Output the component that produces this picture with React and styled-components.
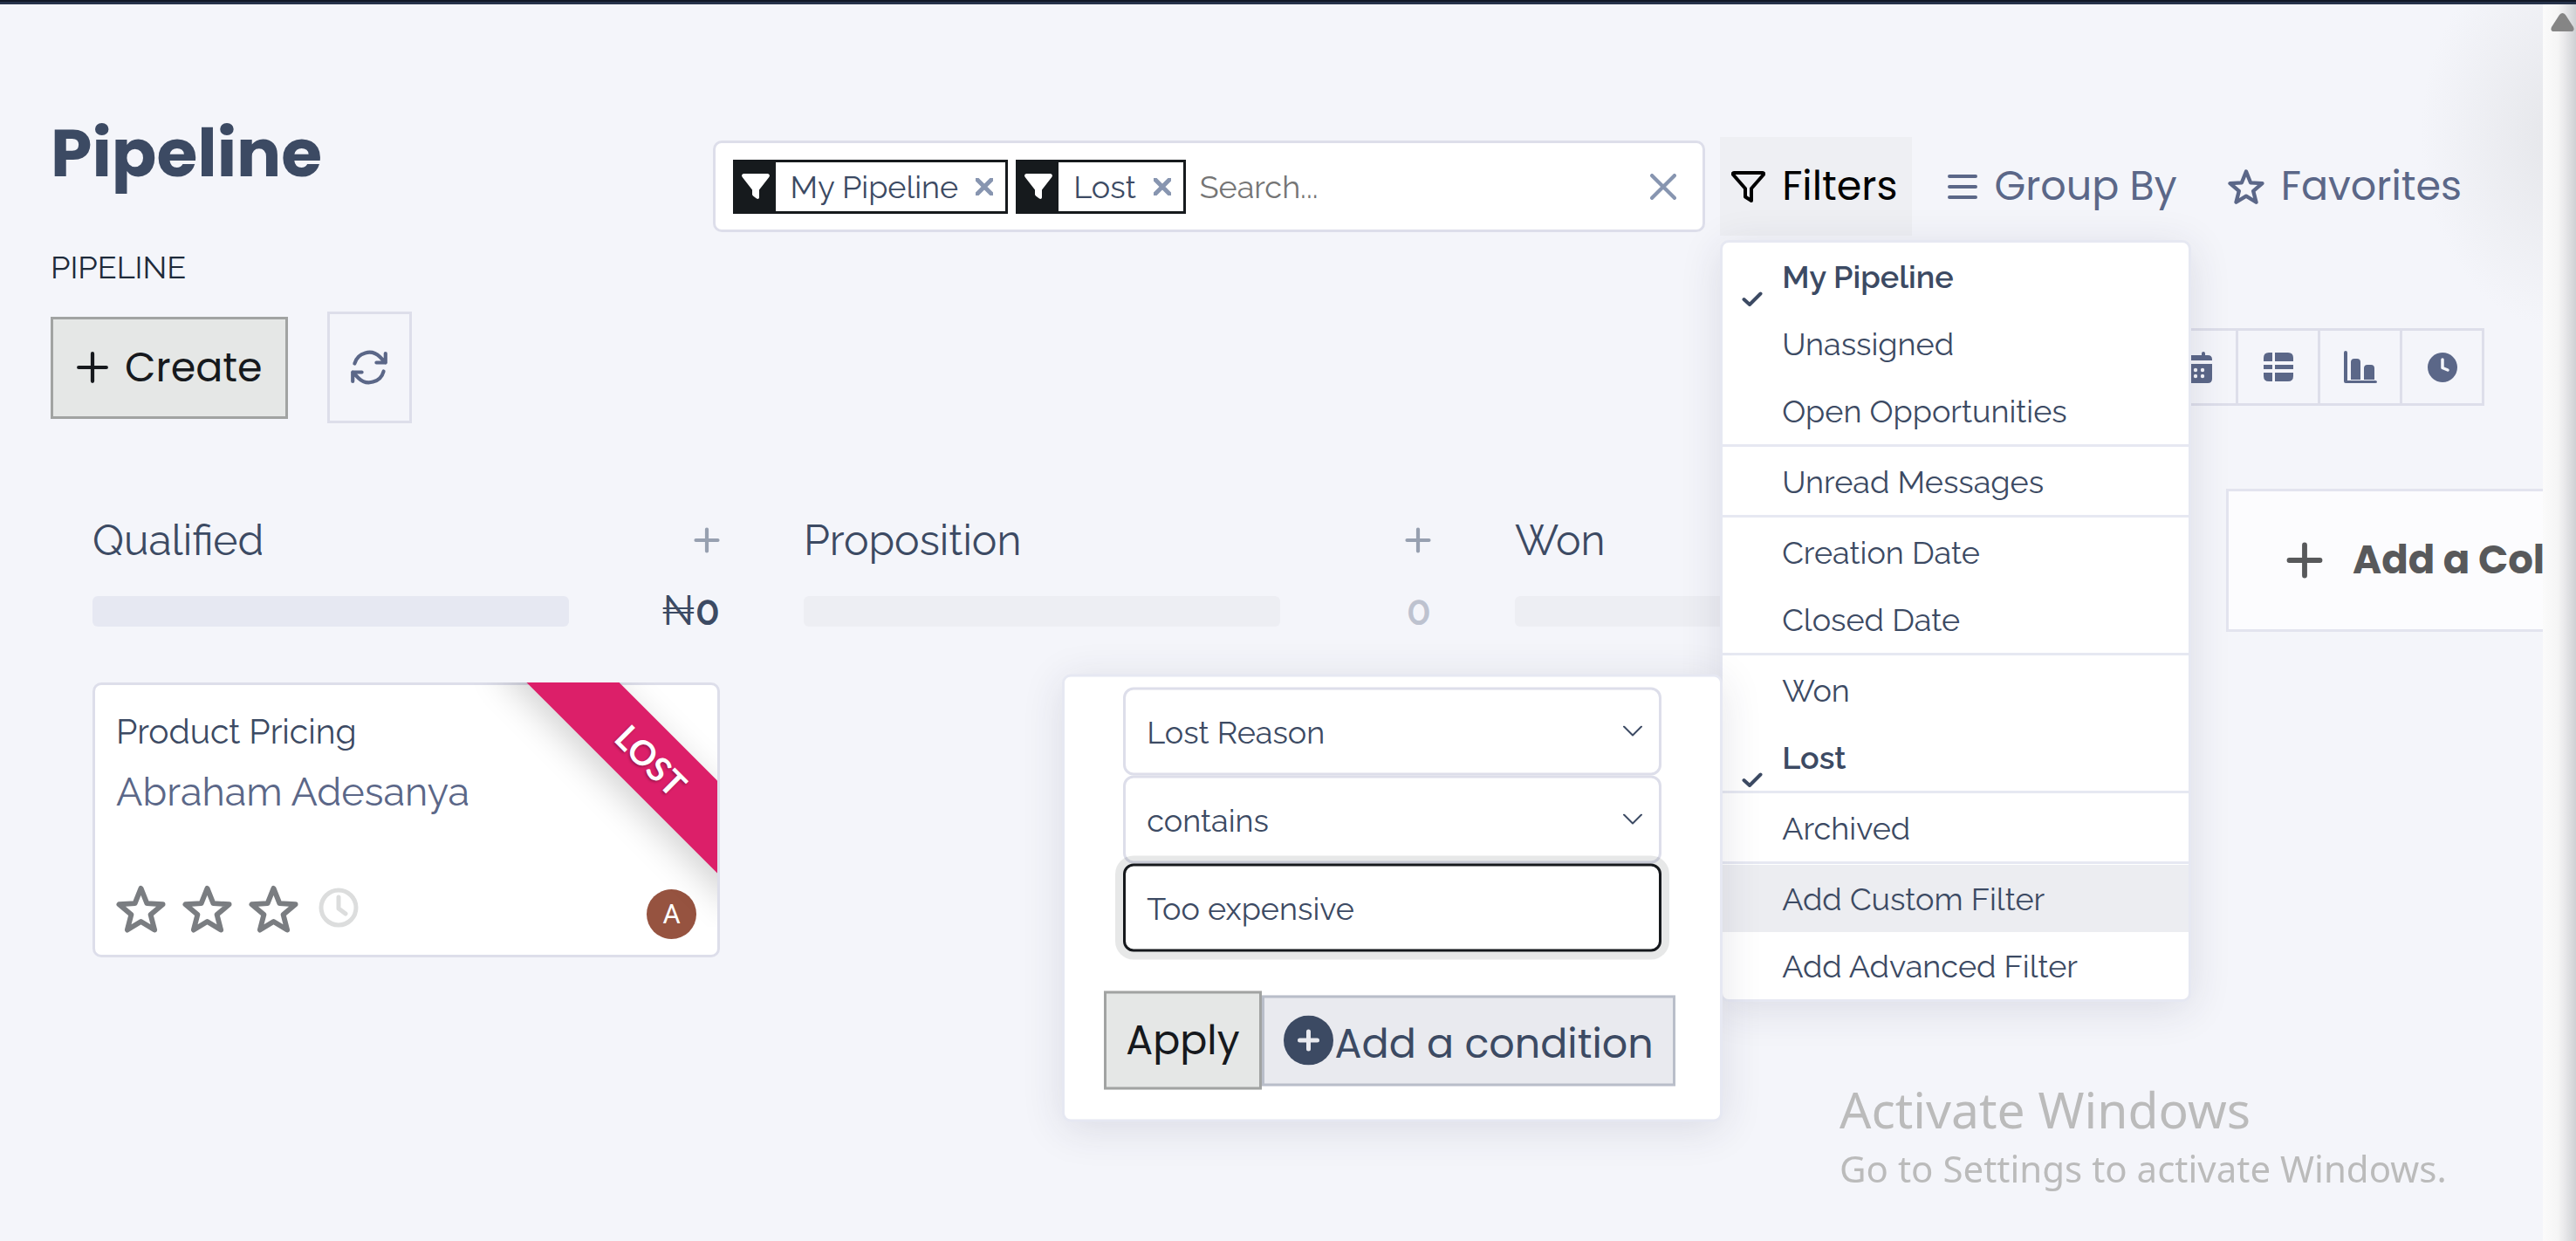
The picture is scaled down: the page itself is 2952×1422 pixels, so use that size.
import React from "react";
import styled, { createGlobalStyle, css } from "styled-components";
import { HiOutlineArrowPath } from "react-icons/hi2";

const heading = '"Poppins", Inter, sans-serif';
const body = '"Raleway", Lato, sans-serif';

const GlobalStyle = createGlobalStyle`
  * { box-sizing: border-box; }
  html, body { margin: 0; background: #f4f5fa; }
  body { font-family: ${body}; color: #3c4a63; overflow: hidden; }
  button, input, select { font: inherit; color: inherit; margin: 0; }
  h1, h2, h3, p, ul { margin: 0; padding: 0; font-weight: 400; }
  ul { list-style: none; }
  svg { display: block; flex: none; }
`;

const Page = styled.div`
  display: grid;
  grid-template-columns: minmax(0, 1fr) 38px;
  height: 100vh;
  border-top: 2px solid #111826;
`;

const Main = styled.main`
  overflow: hidden;
  border-top: 3px solid #26324a;
  background: radial-gradient(ellipse 160px 220px at calc(100% + 20px) 150px, #e5e6ea, #f4f5fa) #f4f5fa;
`;

const ScrollTrack = styled.aside`
  display: flex;
  justify-content: flex-end;
  align-items: flex-start;
  padding: 10px 2px;
  border-top: 3px solid #26324a;
  background: linear-gradient(to right, #fbfbfb, #f5f5f5 45%, #e9e9eb 65%, #cfd1d4);
`;

const Header = styled.header`
  display: grid;
  grid-template-columns: minmax(0, 272fr) minmax(0, 728fr);
  padding: 123px 67px 0 58px;
`;

const Title = styled.h1`
  font: 700 76px/96px ${heading};
  color: #3c4a63;
`;

const Breadcrumb = styled.p`
  margin-top: 60px;
  font-size: 36px;
  line-height: 44px;
  color: #1e2a3a;
`;

const Actions = styled.div`
  display: flex;
  align-items: center;
  gap: 45px;
  margin-top: 29px;
`;

const Button = styled.button`
  display: flex;
  align-items: center;
  justify-content: center;
  gap: ${(p) => p.$gap || 18}px;
  height: ${(p) => p.$height}px;
  padding: 0 ${(p) => p.$pad || 22}px;
  border: 3px solid #a1a3a2;
  background: #e5e7e6;
  color: #16191d;
  font-family: ${heading};
  font-size: 46px;
  white-space: nowrap;
`;

const ConditionButton = styled(Button)`
  padding-top: 8px;
  border-color: #b9bec9;
  background: #e9eaef;
  color: #3c4a63;
  svg { margin-bottom: 8px; }
`;

const RefreshButton = styled.button`
  display: flex;
  align-items: center;
  justify-content: center;
  width: 97px;
  height: 128px;
  border: 3px solid #dddeea;
  background: transparent;
  color: #5b6788;
`;

const Tools = styled.div`
  display: flex;
  flex-direction: column;
  padding-top: 29px;
`;

const SearchRow = styled.div`
  display: flex;
  align-items: center;
  gap: 17px;
  padding-right: 9px;
`;

const SearchBox = styled.div`
  flex: 1;
  min-width: 0;
  display: flex;
  align-items: center;
  gap: 9px;
  height: 105px;
  padding: 0 30px 0 20px;
  border: 3px solid #dddeea;
  border-radius: 10px;
  background: #fff;
`;

const Chip = styled.div`
  display: flex;
  height: 62px;
  border: 3px solid #161a1d;
  font-size: 36px;
  line-height: 56px;
  white-space: nowrap;
`;

const ChipIcon = styled.span`
  display: flex;
  align-items: center;
  justify-content: center;
  width: 46px;
  background: #161a1d;
  color: #fff;
`;

const ChipText = styled.span`
  padding: 0 20px 0 17px;
`;

const IconButton = styled.button`
  display: flex;
  align-items: center;
  padding: 0 ${(p) => p.$pad || 0}px 0 0;
  border: 0;
  background: none;
  color: ${(p) => p.$color || "#8795b0"};
`;

const SearchInput = styled.input`
  flex: 1;
  min-width: 0;
  padding: 0 7px;
  border: 0;
  outline: 0;
  background: none;
  font-size: 36px;
  &::placeholder { color: #757575; opacity: 1; }
`;

const ToolMenus = styled.nav`
  display: flex;
  gap: 28px;
`;

const Dropdown = styled.div`
  position: relative;
`;

const MenuToggle = styled.button`
  display: flex;
  align-items: center;
  gap: 19px;
  height: 113px;
  padding: 0 17px 0 13px;
  border: 0;
  background: ${(p) => (p.$open ? "#eeeff3" : "transparent")};
  color: ${(p) => (p.$open ? "#000" : "#5b6788")};
  font-family: ${heading};
  font-size: 46px;
  white-space: nowrap;
`;

const panel = css`
  border: 3px solid #e6e8f2;
  border-radius: 10px;
  background: #fff;
  box-shadow: 0 8px 48px rgba(40, 40, 70, 0.12);
`;

const Menu = styled.ul`
  ${panel}
  position: absolute;
  z-index: 2;
  top: calc(100% + 5px);
  left: 0;
  width: 540px;
`;

const MenuItem = styled.li`
  position: relative;
  padding-top: ${(p) => (p.$divided ? 1 : 0)}px;
  border-top: ${(p) => (p.$divided ? "3px solid #e6e8f2" : "0")};
`;

const MenuButton = styled.button`
  display: grid;
  grid-template-columns: 46px 1fr;
  align-items: center;
  width: 100%;
  height: 77px;
  padding: 0 0 0 22px;
  border: 0;
  background: ${(p) => (p.$active ? "#ecedf1" : "transparent")};
  color: #3c4a63;
  font-size: 36px;
  line-height: 46px;
  font-weight: ${(p) => (p.$checked ? 600 : 400)};
  text-align: left;
  svg { align-self: end; margin-bottom: 4px; }
`;

const MenuLabel = styled.span`
  grid-column: 2;
  grid-row: 1;
`;

const FilterPanel = styled.form`
  ${panel}
  position: absolute;
  top: 50%;
  right: 100%;
  transform: translateY(-50%);
  width: 757px;
  padding: 12px 0 34px;
`;

const Fields = styled.div`
  padding: 0 67px;
`;

const SelectWrap = styled.div`
  display: grid;
  align-items: center;
  > * { grid-area: 1 / 1; }
  > svg { justify-self: end; margin-right: 22px; pointer-events: none; }
`;

const control = css`
  width: 100%;
  height: 101px;
  padding: 0 24px;
  border: 3px solid #dddeea;
  border-radius: 12px;
  background: #fff;
  font-size: 36px;
  outline: 0;
`;

const Select = styled.select`
  ${control}
  appearance: none;
`;

const TextInput = styled.input`
  ${control}
  display: block;
  position: relative;
  border-color: #16191d;
  box-shadow: 0 0 0 9px rgba(22, 32, 29, 0.1);
`;

const PanelActions = styled.div`
  display: flex;
  align-items: center;
  margin-top: 45px;
  padding: 0 45px;
`;

const Views = styled.div`
  display: flex;
  align-self: flex-end;
  margin-top: 106px;
  border: 3px solid #dddeea;
`;

const ViewButton = styled.button`
  display: flex;
  align-items: center;
  justify-content: center;
  width: ${(p) => (p.$first ? 91 : 94)}px;
  height: 83px;
  border: 0;
  border-left: ${(p) => (p.$first ? "0" : "3px solid #dddeea")};
  background: transparent;
  color: #5b6788;
`;

const Board = styled.section`
  display: flex;
  align-items: flex-start;
  gap: 96px;
  padding: 75px 0 0 106px;
`;

const Column = styled.section`
  flex: 0 0 719px;
  padding-top: 30px;
`;

const ColumnHeader = styled.div`
  display: flex;
  align-items: center;
  justify-content: space-between;
`;

const ColumnTitle = styled.h2`
  font-size: 48px;
  line-height: 58px;
`;

const Progress = styled.div`
  display: flex;
  align-items: center;
  justify-content: space-between;
  height: 44px;
  margin-top: 30px;
`;

const Bar = styled.div`
  width: 76%;
  height: 35px;
  border-radius: 6px;
  background: ${(p) => (p.$empty ? "#edeef3" : "#e6e8f2")};
`;

const Total = styled.span`
  font-size: 46px;
  line-height: 44px;
  font-weight: 600;
  color: ${(p) => (p.$empty ? "#bdc2cf" : "#3c4a63")};
`;

const Currency = styled.span`
  font-weight: 400;
`;

const Card = styled.article`
  position: relative;
  height: 315px;
  display: flex;
  flex-direction: column;
  margin-top: 60px;
  padding: 29px 24px 18px;
  border: 3px solid #dddeea;
  border-radius: 10px;
  background: #fff;
`;

const CardTitle = styled.h3`
  font-size: 39px;
  line-height: 48px;
`;

const CardLink = styled.a`
  margin-top: 18px;
  font-size: 45px;
  line-height: 56px;
  color: #5b6788;
  text-decoration: none;
`;

const CardFooter = styled.div`
  display: flex;
  align-items: flex-start;
  gap: 19px;
  margin-top: auto;
  color: #7a7d81;
`;

const Avatar = styled.span`
  margin: 6px 0 0 auto;
  width: 57px;
  height: 57px;
  border-radius: 50%;
  background: #965340;
  color: #fff;
  font: 400 31px/57px Roboto, sans-serif;
  text-align: center;
`;

const RibbonClip = styled.div`
  position: absolute;
  top: -3px;
  right: 0;
  width: 280px;
  height: 280px;
  overflow: hidden;
`;

const Ribbon = styled.span`
  position: absolute;
  top: 52px;
  left: 4px;
  width: 400px;
  transform: rotate(45deg);
  background: #dc1f69;
  box-shadow: 0 12px 40px rgba(0, 0, 0, 0.18);
  color: #fff;
  font: 700 39px/75px Lato, sans-serif;
  text-align: center;
  text-shadow: 0 2px 3px rgba(0, 0, 0, 0.3);
`;

const AddColumn = styled.button`
  display: flex;
  align-items: center;
  gap: 34px;
  flex: 0 0 719px;
  height: 164px;
  padding: 0 66px;
  border: 3px solid #e3e4ef;
  background: #fcfcfe;
  color: #58595b;
  font: 700 45px/56px ${heading};
  white-space: nowrap;
`;

const Watermark = styled.div`
  position: fixed;
  z-index: 3;
  right: 152px;
  bottom: 53px;
  width: 692px;
  font-family: "Segoe UI", "Noto Sans", sans-serif;
  color: #bbb;
  white-space: nowrap;
  pointer-events: none;
`;

const WatermarkTitle = styled.p`
  font-size: 57px;
  line-height: 76px;
`;

const WatermarkText = styled.p`
  font-size: 42px;
  line-height: 60px;
`;

const Stroke = ({ w, h = w, box, width = 2, children }) => (
  <svg width={w} height={h} viewBox={box || `0 0 ${w} ${h}`} fill="none" stroke="currentColor"
    strokeWidth={width} strokeLinecap="round" strokeLinejoin="round" aria-hidden="true">{children}</svg>
);
const Fill = ({ w, h = w, children }) => (
  <svg width={w} height={h} viewBox={`0 0 ${w} ${h}`} fill="currentColor" aria-hidden="true">{children}</svg>
);

const Plus = ({ size, width = 4 }) => (
  <Stroke w={size} box="0 0 36 36" width={width}><path d="M18 3v30M3 18h30" /></Stroke>
);
const Cross = ({ size, width }) => (
  <Stroke w={size} box="0 0 28 28" width={width}><path d="M2 2l24 24M26 2L2 26" /></Stroke>
);
const Bars = () => (
  <Stroke w={34} h={30} width={4}><path d="M2 3h30M2 15h30M2 27h30" /></Stroke>
);
const FunnelOutline = () => (
  <Stroke w={39} h={36} width={4}><path d="M3 2h33q1.500 0 1 2L23 20v14l-7-4.500V20L2 4q-.5-2 1-2z" /></Stroke>
);
const FunnelSolid = () => (
  <Fill w={32} h={29}><path d="M2.500 0h27c2.200 0 3.200 2.300 1.800 4L20 18.500V27c0 1.800-1.600 2.400-3 1.400l-4-3c-.7-.6-1-1.200-1-2v-5L.7 4C-.7 2.300.3 0 2.500 0z" /></Fill>
);
const Star = ({ size, width }) => (
  <Stroke w={size} box="0 0 58 56" width={width}>
    <path d="M29 4l7 17.500 18.500 1.200-14.200 12 4.600 17.800L29 42.800 13.100 52.500l4.600-17.800-14.200-12L22 21.500z" />
  </Stroke>
);
const Check = () => (
  <Stroke w={24} h={17} width={4}><path d="M2.500 9l6.500 6L21.500 2.500" /></Stroke>
);
const Chevron = () => (
  <Stroke w={22} h={13} width={2}><path d="M1 1l10 10L21 1" /></Stroke>
);
const ClockOutline = () => (
  <Stroke w={54} width={5}><circle cx="27" cy="27" r="20" /><path d="M27 15v13l8 6" /></Stroke>
);
const ClockSolid = () => (
  <Fill w={34}><circle cx="17" cy="17" r="17" /><path d="M17 8v9.500l6 2.500" stroke="#f4f5fa" strokeWidth="3.500" fill="none" strokeLinecap="round" strokeLinejoin="round" /></Fill>
);
const Calendar = () => (
  <Fill w={36} h={36}>
    <path d="M0 9q0-5 5-5h3V2q0-2 2-2t2 2v2h12V2q0-2 2-2t2 2v2h3q5 0 5 5v1H0zM0 14h36v17q0 5-5 5H5q-5 0-5-5z" />
    <g fill="#f4f5fa">
      {[21, 28].map((y) => [9, 17, 25].map((x) => <circle key={`${x}-${y}`} cx={x} cy={y} r="2.200" />))}
    </g>
  </Fill>
);
const ListIcon = () => (
  <Fill w={34} h={33}>
    <path d="M6 0h4v10H0V6q0-6 6-6zM13 0h15q6 0 6 6v4H13zM0 14h10v5H0zM13 14h21v5H13zM0 23h10v10H6q-6 0-6-6zM13 23h21v4q0 6-6 6H13z" />
  </Fill>
);
const ChartIcon = () => (
  <Fill w={38} h={37}>
    <path d="M2 0q2 0 2 2v32h32q2 0 2 1.500T36 37H2q-2 0-2-2V2q0-2 2-2zM8 13q0-4 4-4h3q4 0 4 4v20H8zM23 20q0-4 4-4h4q4 0 4 4v13H23z" />
  </Fill>
);
const CirclePlus = () => (
  <Fill w={57}><circle cx="28.500" cy="28.500" r="28.500" /><path d="M28.500 18.500v20M18.500 28.500h20" stroke="#e9eaef" strokeWidth="5" strokeLinecap="round" /></Fill>
);
const ScrollArrow = () => (
  <Fill w={27} h={21}><path d="M10 2q3.500-4 7 0l9 14q2 5-3 5H4q-5 0-3-5z" fill="#858585" /></Fill>
);

const filters = [
  { label: "My Pipeline", checked: true },
  { label: "Unassigned" },
  { label: "Open Opportunities" },
  { label: "Unread Messages", divided: true },
  { label: "Creation Date", divided: true },
  { label: "Closed Date" },
  { label: "Won", divided: true },
  { label: "Lost", checked: true },
  { label: "Archived", divided: true },
  { label: "Add Custom Filter", divided: true, active: true },
  { label: "Add Advanced Filter" },
];

const views = [
  ["Calendar", Calendar],
  ["Pivot", ListIcon],
  ["Graph", ChartIcon],
  ["Activity", ClockSolid],
];

function SearchChip({ label }) {
  return (
    <Chip>
      <ChipIcon><FunnelSolid /></ChipIcon>
      <ChipText>{label}</ChipText>
      <IconButton $pad={14} type="button" aria-label={`Remove ${label}`}><Cross size={20} width={7} /></IconButton>
    </Chip>
  );
}

function CustomFilter() {
  return (
    <FilterPanel onSubmit={(e) => e.preventDefault()}>
      <Fields>
        <SelectWrap>
          <Select aria-label="Field" defaultValue="Lost Reason"><option>Lost Reason</option></Select>
          <Chevron />
        </SelectWrap>
        <SelectWrap>
          <Select aria-label="Operator" defaultValue="contains"><option>contains</option></Select>
          <Chevron />
        </SelectWrap>
        <TextInput aria-label="Value" type="text" defaultValue="Too expensive" />
      </Fields>
      <PanelActions>
        <Button $height={113} type="submit">Apply</Button>
        <ConditionButton $height={104} $gap={2} type="button"><CirclePlus />Add a condition</ConditionButton>
      </PanelActions>
    </FilterPanel>
  );
}

function KanbanColumn({ title, currency, empty, children }) {
  return (
    <Column>
      <ColumnHeader>
        <ColumnTitle>{title}</ColumnTitle>
        <IconButton $color="#97a0b0" type="button" aria-label={`Add to ${title}`}><Plus size={30} width={5} /></IconButton>
      </ColumnHeader>
      <Progress>
        <Bar $empty={empty} />
        <Total $empty={empty}>{currency && <Currency>{currency}</Currency>}0</Total>
      </Progress>
      {children}
    </Column>
  );
}

export default function App() {
  return (
    <Page>
      <GlobalStyle />
      <Main>
        <Header>
          <div>
            <Title>Pipeline</Title>
            <Breadcrumb>PIPELINE</Breadcrumb>
            <Actions>
              <Button $height={117} $pad={26} type="button"><Plus size={38} />Create</Button>
              <RefreshButton type="button" aria-label="Refresh"><HiOutlineArrowPath size={50} strokeWidth={2} /></RefreshButton>
            </Actions>
          </div>
          <Tools>
            <SearchRow>
              <SearchBox>
                <SearchChip label="My Pipeline" />
                <SearchChip label="Lost" />
                <SearchInput type="text" aria-label="Search" placeholder="Search..." />
                <IconButton type="button" aria-label="Clear search"><Cross size={30} width={4} /></IconButton>
              </SearchBox>
              <ToolMenus>
                <Dropdown>
                  <MenuToggle $open type="button" aria-expanded="true"><FunnelOutline />Filters</MenuToggle>
                  <Menu>
                    {filters.map((f) => (
                      <MenuItem key={f.label} $divided={f.divided}>
                        <MenuButton type="button" $active={f.active} $checked={f.checked}>
                          {f.checked && <Check />}
                          <MenuLabel>{f.label}</MenuLabel>
                        </MenuButton>
                        {f.active && <CustomFilter />}
                      </MenuItem>
                    ))}
                  </Menu>
                </Dropdown>
                <MenuToggle type="button"><Bars />Group By</MenuToggle>
                <MenuToggle type="button"><Star size={42} width={6} />Favorites</MenuToggle>
              </ToolMenus>
            </SearchRow>
            <Views>
              {views.map(([label, Icon], i) => (
                <ViewButton key={label} $first={i === 0} type="button" aria-label={label}><Icon /></ViewButton>
              ))}
            </Views>
          </Tools>
        </Header>
        <Board>
          <KanbanColumn title="Qualified" currency="₦">
            <Card>
              <CardTitle>Product Pricing</CardTitle>
              <CardLink href="#">Abraham Adesanya</CardLink>
              <CardFooter>
                {[1, 2, 3].map((n) => <Star key={n} size={57} width={6} />)}
                <IconButton $color="#dcdddd" type="button" aria-label="Schedule activity"><ClockOutline /></IconButton>
                <Avatar>A</Avatar>
              </CardFooter>
              <RibbonClip><Ribbon>LOST</Ribbon></RibbonClip>
            </Card>
          </KanbanColumn>
          <KanbanColumn title="Proposition" empty />
          <KanbanColumn title="Won" empty />
          <AddColumn type="button"><Plus size={42} width={5} />Add a Column</AddColumn>
        </Board>
      </Main>
      <ScrollTrack><ScrollArrow /></ScrollTrack>
      <Watermark>
        <WatermarkTitle>Activate Windows</WatermarkTitle>
        <WatermarkText>Go to Settings to activate Windows.</WatermarkText>
      </Watermark>
    </Page>
  );
}
